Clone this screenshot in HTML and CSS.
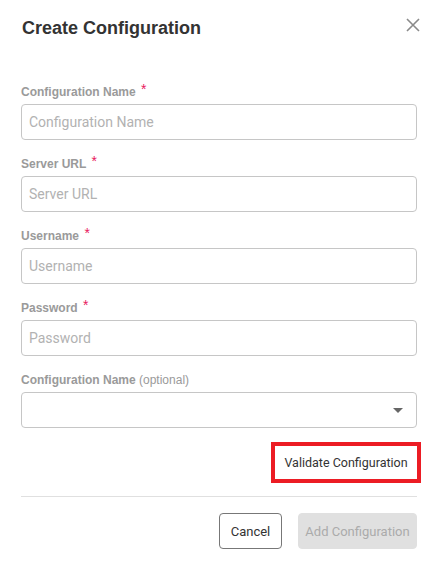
FILE: index.html
```html
<!DOCTYPE html>
<html lang="en">
<head>
<meta charset="utf-8">
<title>Create Configuration</title>
<link rel="stylesheet" href="styles.css">
</head>
<body>
<div class="dialog">
  <header class="dialog-header">
    <h1 class="dialog-title">Create Configuration</h1>
    <button class="close-btn" aria-label="Close">
      <svg width="14" height="14" viewBox="0 0 14 14"><path d="M1 1L13 13M13 1L1 13" stroke="#8a8a8a" stroke-width="1.6" fill="none"/></svg>
    </button>
  </header>
  <form class="form">
    <div class="field">
      <label class="label">Configuration Name <span class="req">*</span></label>
      <input class="input" type="text" placeholder="Configuration Name">
    </div>
    <div class="field">
      <label class="label">Server URL <span class="req">*</span></label>
      <input class="input" type="text" placeholder="Server URL">
    </div>
    <div class="field">
      <label class="label">Username <span class="req">*</span></label>
      <input class="input" type="text" placeholder="Username">
    </div>
    <div class="field">
      <label class="label">Password <span class="req">*</span></label>
      <input class="input" type="password" placeholder="Password">
    </div>
    <div class="field">
      <label class="label">Configuration Name <span class="opt">(optional)</span></label>
      <div class="select">
        <svg class="caret" width="10" height="5" viewBox="0 0 10 5"><path d="M0 0H10L5 5Z" fill="#666"/></svg>
      </div>
    </div>
    <div class="validate-row">
      <button type="button" class="validate-btn">Validate Configuration</button>
    </div>
  </form>
  <div class="divider"></div>
  <footer class="actions">
    <button type="button" class="btn btn-cancel">Cancel</button>
    <button type="button" class="btn btn-add" disabled>Add Configuration</button>
  </footer>
</div>
</body>
</html>
```
FILE: styles.css
```css
* { box-sizing: border-box; }
html, body { margin: 0; padding: 0; background: #fff; }
body { font-family: Roboto, "Liberation Sans", Arial, sans-serif; color: #333; }

.dialog { padding: 16px 21px 0 21px; width: 438px; }

.dialog-header { display: flex; justify-content: space-between; align-items: flex-start; }
.dialog-title { margin: 0; font-family: "Liberation Sans", Arial, sans-serif; font-size: 18px; line-height: 24px; font-weight: 700; color: #333; padding-left: 1px; }
.close-btn { border: 0; background: none; padding: 0; margin: 2px -3px 0 0; width: 14px; height: 14px; display: block; }
.close-btn svg { display: block; }

.form { margin-top: 44px; display: flex; flex-direction: column; gap: 16px; }
.field { display: flex; flex-direction: column; gap: 4px; }
.label { display: block; height: 16px; font-family: "Liberation Sans", Arial, sans-serif; font-size: 12px; line-height: 16px; font-weight: 700; color: #9a9a9a; white-space: nowrap; }
.req { color: #e8195e; font-size: 14px; line-height: 0; font-weight: 400; position: relative; top: -2px; margin-left: 2px; }
.opt { font-weight: 400; }

.input { height: 36px; border: 1px solid #c6c6c6; border-radius: 4px; padding: 0 7px; font-family: inherit; font-size: 14px; color: #333; outline: none; width: 100%; }
.input::placeholder { color: #b2b2b2; }

.select { height: 36px; border: 1px solid #c6c6c6; border-radius: 4px; display: flex; align-items: center; justify-content: flex-end; padding-right: 13px; }
.caret { display: block; }

.validate-row { display: flex; justify-content: flex-end; margin-top: -2px; margin-right: -4px; }
.validate-btn { width: 150px; height: 41px; border: 4px solid #ec1c24; background: #fff; font-family: inherit; font-size: 12.5px; color: #333; padding: 0; }

.divider { height: 1px; background: #e0e0e0; margin-top: 13px; }

.actions { display: flex; justify-content: flex-end; gap: 16px; margin-top: 16px; }
.btn { height: 36px; border-radius: 4px; font-family: inherit; font-size: 13px; padding: 0; }
.btn-cancel { background: #fff; border: 1px solid #777; color: #333; width: 63px; }
.btn-add { background: #e0e0e0; border: 1px solid #e0e0e0; color: #ababab; width: 119px; }
```
